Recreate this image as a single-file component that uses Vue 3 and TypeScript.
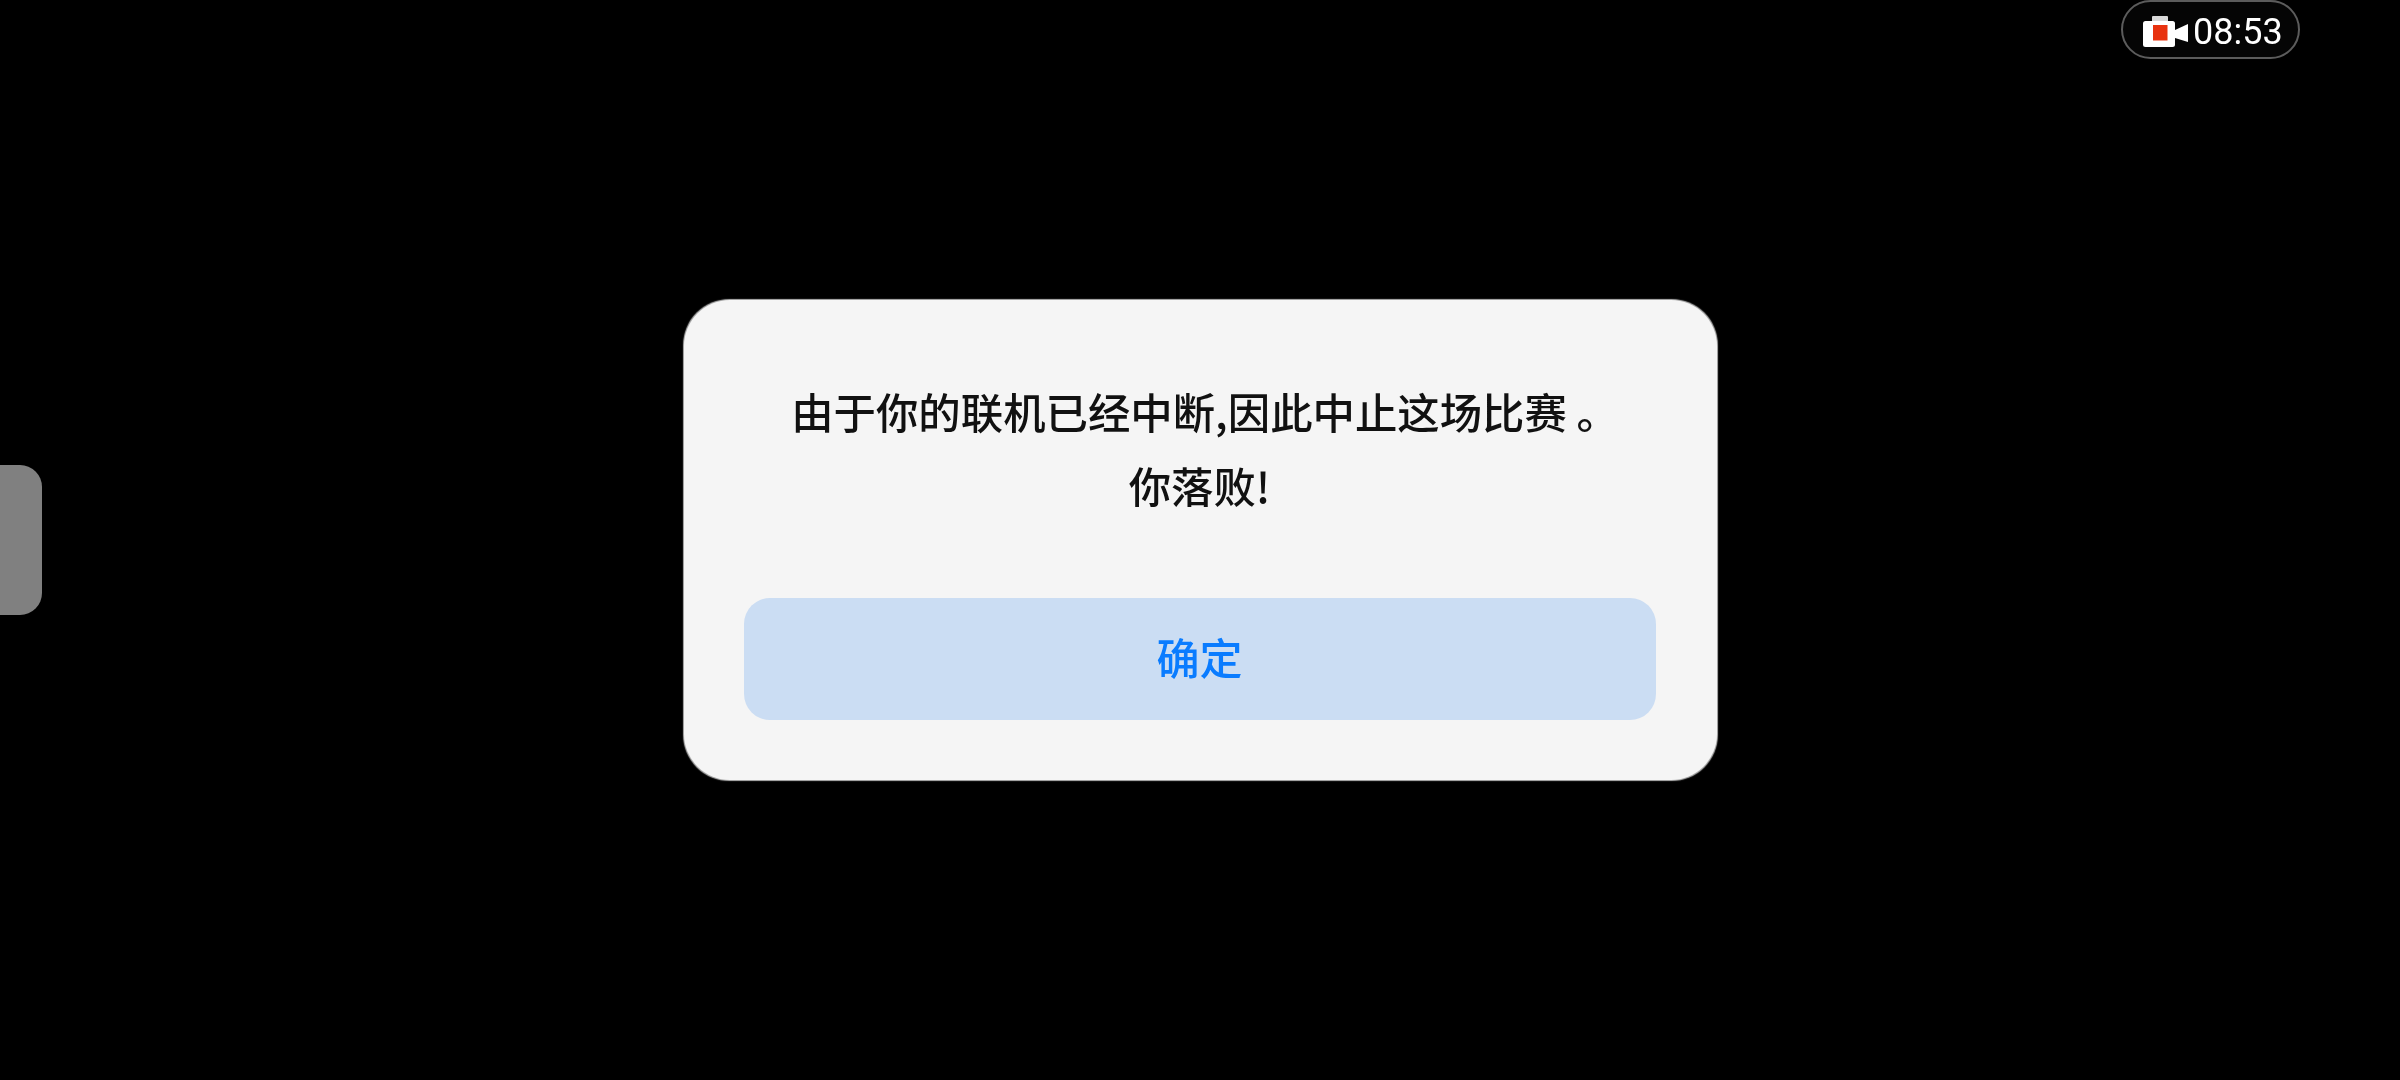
<script setup lang="ts">
const lines: string[] = ['由于你的联机已经中断,因此中止这场比赛 。', '你落败!']
</script>

<template>
  <main class="screen">
    <aside class="side-tab"></aside>
    <div class="recorder">
      <svg class="cam" viewBox="0 0 46 32" aria-hidden="true">
        <rect x="9" y="0" width="16" height="6" rx="1" fill="#fff" opacity="0.85" />
        <rect x="0" y="5" width="32" height="26" rx="2.5" fill="#fff" />
        <rect x="10" y="9" width="14.5" height="15.5" fill="#e8320f" />
        <path d="M32 14 L45 8 V26 L32 22 Z" fill="#fff" />
      </svg>
      <span class="time">08:53</span>
    </div>
    <section class="dialog">
      <div class="message">
        <p v-for="(line, i) in lines" :key="line" :class="{ lead: i === 0 }">{{ line }}</p>
      </div>
      <button class="confirm" type="button"><span>确定</span></button>
    </section>
  </main>
</template>

<style scoped>
.screen {
  position: relative;
  width: 2400px;
  height: 1080px;
  background: #000;
  display: flex;
  align-items: center;
  justify-content: center;
  overflow: hidden;
  font-family: "Noto Sans CJK SC", "Liberation Sans", sans-serif;
}
.side-tab {
  position: absolute;
  left: 0;
  top: 465px;
  width: 42px;
  height: 150px;
  background: #808080;
  border-radius: 0 22px 22px 0;
}
.recorder {
  position: absolute;
  left: 2121px;
  top: 0;
  width: 179px;
  height: 59px;
  box-sizing: border-box;
  border: 2px solid #5c5c5c;
  border-radius: 30px;
  background: #050505;
  display: flex;
  align-items: center;
  padding: 4px 0 0 20px;
  gap: 4px;
}
.cam {
  width: 46px;
  height: 32px;
  flex: none;
}
.time {
  color: #fff;
  font-family: Roboto, "Liberation Sans", sans-serif;
  font-size: 36px;
  line-height: 1;
  filter: blur(0.4px);
}
.dialog {
  width: 1033px;
  height: 480px;
  box-sizing: border-box;
  background: #f5f5f5;
  border-radius: 46px;
  box-shadow: 0 0 1px 0.5px rgba(255, 255, 255, 0.7);
  padding: 74px 61px 60px 60px;
  display: flex;
  flex-direction: column;
  justify-content: space-between;
}
.message {
  text-align: center;
  color: #111;
  font-size: 42.4px;
  font-weight: 500;
  line-height: 73.5px;
  filter: blur(0.5px);
}
.message p {
  margin: 0;
  white-space: pre;
}
.message .lead {
  text-indent: 11px;
}
.confirm {
  height: 122px;
  width: 100%;
  border: 0;
  border-radius: 26px;
  background: #cbddf3;
  color: #0a7cff;
  font-family: inherit;
  font-size: 43px;
  font-weight: 500;
  padding: 0 0 6px;
}
.confirm span {
  filter: blur(0.5px);
}
</style>

<style>
html, body {
  margin: 0;
  background: #000;
}
</style>
